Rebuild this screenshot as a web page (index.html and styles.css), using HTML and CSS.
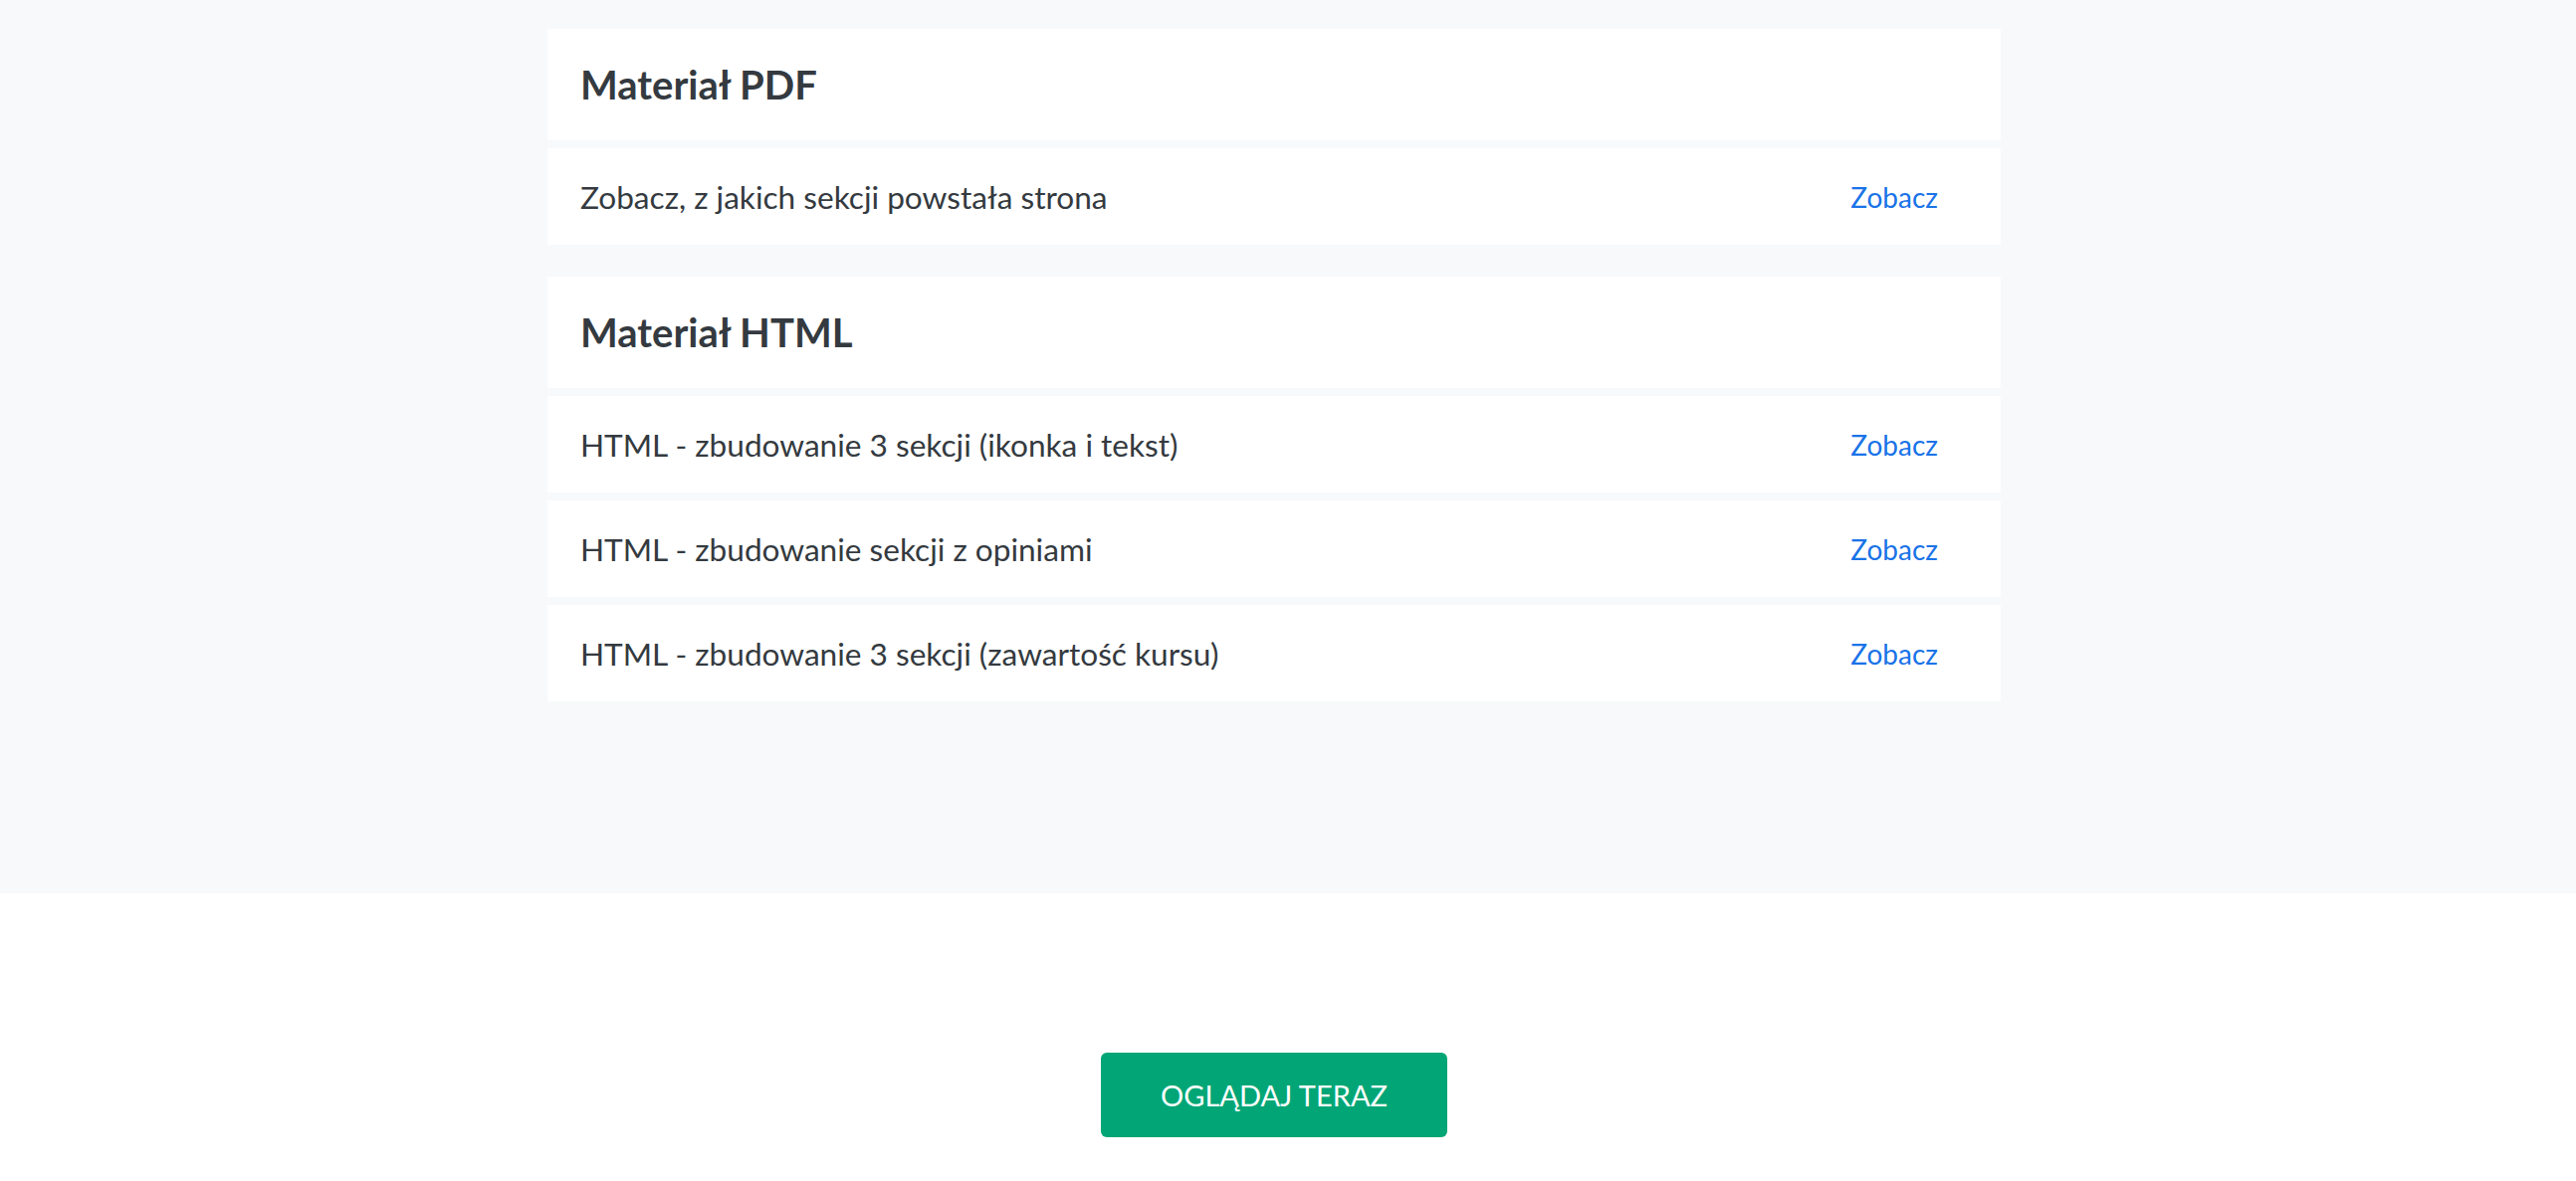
FILE: index.html
```html
<!DOCTYPE html>
<html lang="pl">
<head>
<meta charset="utf-8">
<title>Materiały</title>
<link rel="stylesheet" href="styles.css">
</head>
<body>
<section class="materials">
  <div class="inner">
    <div class="list">
      <div class="group">
        <div class="card head"><h3>Materiał PDF</h3></div>
        <div class="card row"><span class="label">Zobacz, z jakich sekcji powstała strona</span><a class="link" href="#">Zobacz</a></div>
      </div>
      <div class="group">
        <div class="card head"><h3>Materiał HTML</h3></div>
        <div class="card row"><span class="label">HTML - zbudowanie 3 sekcji (ikonka i tekst)</span><a class="link" href="#">Zobacz</a></div>
        <div class="card row"><span class="label">HTML - zbudowanie sekcji z opiniami</span><a class="link" href="#">Zobacz</a></div>
        <div class="card row"><span class="label">HTML - zbudowanie 3 sekcji (zawartość kursu)</span><a class="link" href="#">Zobacz</a></div>
      </div>
    </div>
  </div>
</section>
<section class="cta">
  <div class="inner">
    <a class="btn" href="#">OGLĄDAJ TERAZ</a>
  </div>
</section>
</body>
</html>
```
FILE: styles.css
```css
* { box-sizing: border-box; }
html, body { margin: 0; padding: 0; }
body {
  font-family: Lato, "Noto Sans", sans-serif;
  color: #343a40;
  background: #ffffff;
}
.inner {
  width: 2560px;
}
.materials {
  background: #f8f9fa;
  height: 898px;
  padding-top: 29px;
}
.list {
  width: 1460px;
  margin: 0 auto;
  display: flex;
  flex-direction: column;
  gap: 32px;
}
.group {
  display: flex;
  flex-direction: column;
  gap: 8px;
}
.card {
  background: #ffffff;
  display: flex;
  align-items: center;
  padding-left: 33px;
}
.head { height: 112px; }
.head h3 {
  margin: 0;
  font-size: 40px;
  font-weight: 700;
  line-height: 1.2;
}
.row {
  height: 97px;
  justify-content: space-between;
  padding-right: 63px;
  font-size: 31.6px;
}
.link {
  color: #1a73e8;
  text-decoration: none;
  font-size: 28px;
}
.cta {
  height: 289px;
  padding-top: 160px;
}
.cta .inner {
  display: flex;
  justify-content: center;
}
.btn {
  display: flex;
  align-items: center;
  justify-content: center;
  width: 348px;
  height: 85px;
  background: #02a676;
  color: #ffffff;
  border-radius: 6px;
  text-decoration: none;
  font-size: 29px;
}
```
